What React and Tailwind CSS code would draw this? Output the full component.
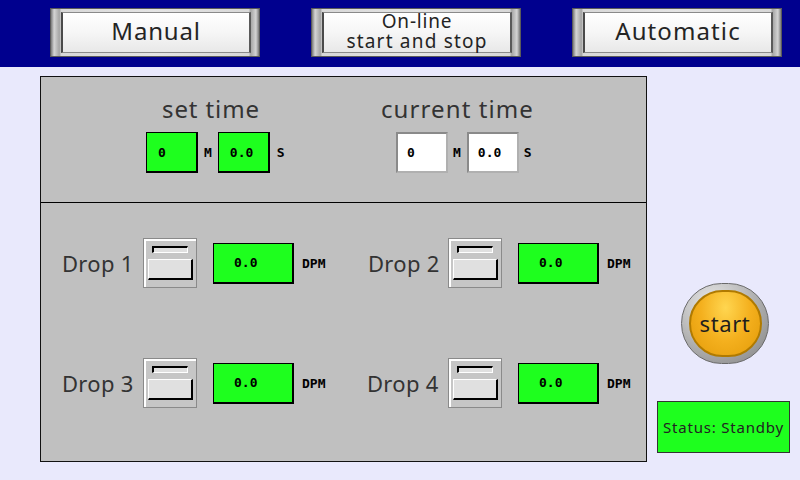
import React from "react";

const sans = { fontFamily: '"Noto Sans", "Open Sans", sans-serif' };

const HeaderButton = ({ children }) => (
  <div className="w-[210px] h-[49px] border border-[#5a5a5a] bg-[linear-gradient(to_right,#7a7a7a,#d4d4d4_1.5%,#a4a4a4_4%,#d8d8d8_5%,#e4e4e4_50%,#d8d8d8_95%,#a4a4a4_96%,#d4d4d4_98.5%,#7a7a7a)] pl-[10px] pr-[8px] py-[3px]">
    <div className="w-full h-full border-l-2 border-r-2 border-t border-b border-l-[#4a4a4a] border-r-[#5a5a5a] border-t-[#8a8a8a] border-b-[#8a8a8a] bg-[linear-gradient(to_bottom,#ffffff,#f6f6f6_50%,#e8e8e8)] flex flex-col items-center justify-center text-center text-[#242424] pb-[3px]">
      {children}
    </div>
  </div>
);

const Mono = ({ children, className = "" }) => (
  <span
    className={`text-[13px] font-bold text-black leading-none ${className}`}
    style={{ fontFamily: '"DejaVu Sans Mono", "Liberation Mono", monospace' }}
  >
    {children}
  </span>
);

const GreenBox = ({ value }) => (
  <div className="w-[52px] h-[41px] bg-[#1eff1e] border-l border-t border-r-2 border-b-2 border-black flex items-center pl-[11px]">
    <Mono>{value}</Mono>
  </div>
);

const WhiteBox = ({ value }) => (
  <div className="w-[52px] h-[41px] bg-white border-2 border-t-[#8a8a8a] border-l-[#8a8a8a] border-r-[#b0b0b0] border-b-[#b0b0b0] flex items-center pl-[9px]">
    <Mono>{value}</Mono>
  </div>
);

const Toggle = () => (
  <div className="w-[54px] h-[50px] border border-[#8a8a8a] bg-[#c6c6c6]">
    <div className="w-full h-full border-l-2 border-t-2 border-white flex flex-col">
      <div className="ml-[6px] mt-[5px] w-[36px] h-[7px] bg-[#e0e0e0] border-t-2 border-l-2 border-black border-b border-r border-b-white border-r-white" />
      <div className="ml-[2px] mt-[6px] w-[45px] h-[21px] bg-[#e0e0e0] border-t border-l border-white border-b-2 border-r-2 border-b-black border-r-black" />
    </div>
  </div>
);

const Drop = ({ label, textW }) => (
  <div className="flex items-center h-[50px]">
    <div className={`${textW} text-[22px] tracking-[0.3px] text-[#333] leading-none`} style={sans}>
      {label}
    </div>
    <Toggle />
    <div className="ml-[16px] w-[81px] h-[41px] bg-[#1eff1e] border-l border-t border-r-2 border-b-2 border-black flex items-center pl-[20px]">
      <Mono>0.0</Mono>
    </div>
    <Mono className="ml-[8px]">DPM</Mono>
  </div>
);

export default function App() {
  return (
    <div className="w-[800px] h-[480px] bg-[#e9e9fc] flex flex-col overflow-hidden">
      {/* Header */}
      <div className="h-[67px] bg-[#00008e] flex pl-[50px] pt-[8px] gap-[51px]">
        <HeaderButton>
          <span className="text-[24px] tracking-[0.8px] leading-none" style={sans}>Manual</span>
        </HeaderButton>
        <HeaderButton>
          <div className="text-[19px] tracking-[0.8px] leading-[20px]" style={sans}>On-line</div>
          <div className="text-[19px] tracking-[1.2px] leading-[20px]" style={sans}>start and stop</div>
        </HeaderButton>
        <HeaderButton>
          <span className="text-[24px] tracking-[1.1px] leading-none" style={sans}>Automatic</span>
        </HeaderButton>
      </div>

      <div className="flex">
        {/* Main panel */}
        <div className="ml-[40px] mt-[9px] w-[607px] h-[386px] bg-[#c0c0c0] border border-[#111] flex flex-col">
          <div className="h-[126px] border-b border-black flex pt-[20px]">
            <div className="ml-[105px] w-[141px] flex flex-col">
              <div className="pl-[16px] text-[24px] tracking-[0.9px] leading-[24px] text-[#333]" style={sans}>
                set time
              </div>
              <div className="flex items-center mt-[11px]">
                <GreenBox value="0" />
                <Mono className="ml-[6px]">M</Mono>
                <div className="ml-[6px]">
                  <GreenBox value="0.0" />
                </div>
                <Mono className="ml-[7px]">S</Mono>
              </div>
            </div>
            <div className="ml-[94px] flex flex-col">
              <div className="text-[24px] tracking-[1.1px] leading-[24px] text-[#333]" style={sans}>
                current time
              </div>
              <div className="flex items-center mt-[11px] pl-[15px]">
                <WhiteBox value="0" />
                <Mono className="ml-[5px]">M</Mono>
                <div className="ml-[6px]">
                  <WhiteBox value="0.0" />
                </div>
                <Mono className="ml-[5px]">S</Mono>
              </div>
            </div>
          </div>

          <div className="flex flex-col pt-[35px] gap-[70px]">
            <div className="flex">
              <div className="ml-[21px] w-[306px]">
                <Drop label="Drop 1" textW="w-[81px]" />
              </div>
              <Drop label="Drop 2" textW="w-[80px]" />
            </div>
            <div className="flex">
              <div className="ml-[21px] w-[305px]">
                <Drop label="Drop 3" textW="w-[81px]" />
              </div>
              <Drop label="Drop 4" textW="w-[81px]" />
            </div>
          </div>
        </div>

        {/* Right column */}
        <div className="flex flex-col">
          <div className="ml-[34px] mt-[216px] w-[88px] h-[81px] rounded-full border border-[#6a6a6a] bg-[radial-gradient(circle_at_35%_25%,#e8e8e8,#b4b4b4_50%,#808080)] flex items-center justify-center">
            <div className="w-[73px] h-[67px] rounded-full border-2 border-[#b07a00] bg-[radial-gradient(ellipse_at_50%_25%,#ffd650,#f4b01e_50%,#e29a08)] flex items-center justify-center">
              <span className="text-[22px] tracking-[0.6px] leading-none text-[#1e1e1e] -mt-[2px]" style={sans}>start</span>
            </div>
          </div>
          <div className="ml-[10px] mt-[37px] w-[133px] h-[52px] bg-[#1eff1e] border border-[#333] flex items-center justify-center">
            <span className="text-[15px] tracking-[0.8px] text-[#222]" style={sans}>Status: Standby</span>
          </div>
        </div>
      </div>
    </div>
  );
}
